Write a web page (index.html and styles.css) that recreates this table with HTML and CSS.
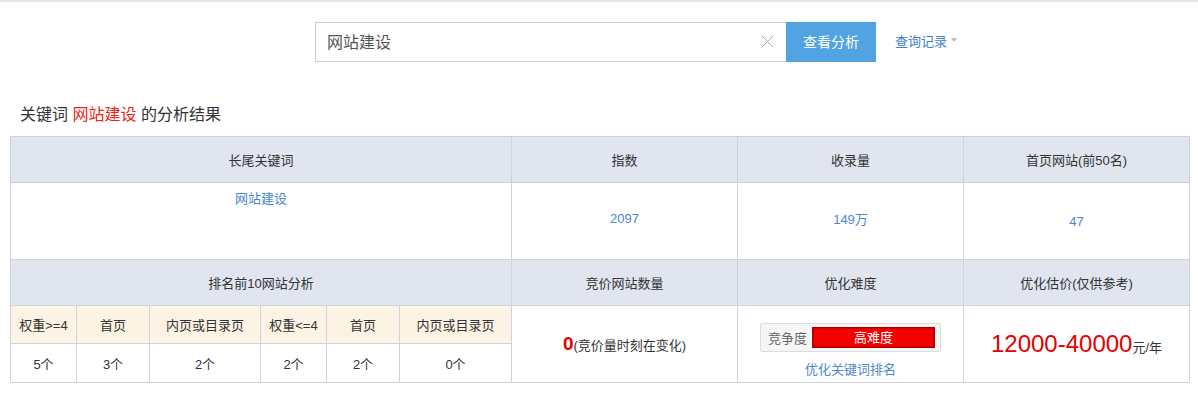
FILE: index.html
```html
<!DOCTYPE html>
<html lang="zh-CN">
<head>
<meta charset="utf-8">
<title>关键词分析</title>
<link rel="stylesheet" href="styles.css">
</head>
<body>
<div class="topbar"></div>
<div class="search">
  <div class="search-box">
    <span class="search-text">网站建设</span>
    <svg class="clear" width="13" height="13" viewBox="0 0 13 13"><path d="M0.5 0.5L12.5 12.5M12.5 0.5L0.5 12.5" stroke="#a9a9a9" stroke-width="1" fill="none"/></svg>
  </div>
  <div class="search-btn">查看分析</div>
  <div class="history">查询记录<span class="caret"></span></div>
</div>
<h2 class="title">关键词 <span class="kw">网站建设</span> 的分析结果</h2>
<table class="result">
  <colgroup>
    <col class="c1"><col class="c2"><col class="c3"><col class="c4"><col class="c5"><col class="c6">
    <col class="cw"><col class="cw"><col class="cw">
  </colgroup>
  <tr class="head">
    <th colspan="6">长尾关键词</th>
    <th>指数</th>
    <th>收录量</th>
    <th>首页网站(前50名)</th>
  </tr>
  <tr class="data">
    <td colspan="6" class="top"><a class="link">网站建设</a></td>
    <td><a class="link">2097</a></td>
    <td><a class="link">149万</a></td>
    <td><a class="link num47">47</a></td>
  </tr>
  <tr class="head">
    <th colspan="6">排名前10网站分析</th>
    <th>竞价网站数量</th>
    <th>优化难度</th>
    <th>优化估价(仅供参考)</th>
  </tr>
  <tr class="sub">
    <td class="subhead">权重&gt;=4</td>
    <td class="subhead">首页</td>
    <td class="subhead">内页或目录页</td>
    <td class="subhead">权重&lt;=4</td>
    <td class="subhead">首页</td>
    <td class="subhead">内页或目录页</td>
    <td rowspan="2"><span class="zero">0</span>(竞价量时刻在变化)</td>
    <td rowspan="2" class="diff-cell">
      <div class="diff">
        <span class="diff-label">竞争度</span>
        <span class="diff-bar">高难度</span>
      </div>
      <a class="link diff-link">优化关键词排名</a>
    </td>
    <td rowspan="2"><span class="price">12000-40000</span><span class="unit">元/年</span></td>
  </tr>
  <tr class="sub2">
    <td>5个</td>
    <td>3个</td>
    <td>2个</td>
    <td>2个</td>
    <td>2个</td>
    <td>0个</td>
  </tr>
</table>
</body>
</html>
```
FILE: styles.css
```css
* { box-sizing: border-box; }
html, body {
  margin: 0;
  padding: 0;
  background: #fff;
  font-family: "Liberation Sans", "Noto Sans CJK SC", sans-serif;
  color: #333;
  font-size: 13px;
}
.topbar {
  height: 2px;
  background: #e6e6e6;
}
.search {
  display: flex;
  align-items: center;
  margin: 20px 0 0 315px;
  height: 40px;
}
.search-box {
  width: 471px;
  height: 40px;
  border: 1px solid #cccccc;
  border-right: none;
  display: flex;
  align-items: center;
  justify-content: space-between;
  padding: 0 12px 2px 11px;
}
.search-text {
  font-size: 16px;
  color: #555;
}
.clear { display: block; margin-top: 0; }
.search-btn {
  width: 90px;
  height: 40px;
  background: #52a3e2;
  color: #fff;
  font-size: 14px;
  display: flex;
  align-items: center;
  justify-content: center;
  padding-bottom: 2px;
}
.history {
  margin-left: 19px;
  color: #3b7fd2;
  font-size: 13px;
  display: flex;
  align-items: center;
  padding-bottom: 4px;
}
.caret {
  display: inline-block;
  margin-left: 4px;
  width: 0;
  height: 0;
  border-left: 3px solid transparent;
  border-right: 3px solid transparent;
  border-top: 4px solid #bbbbbb;
}
.title {
  margin: 42px 0 10px 20px;
  font-size: 16px;
  font-weight: normal;
  line-height: 22px;
  color: #333;
}
.kw { color: #e8231c; }
.result {
  margin-left: 10px;
  width: 1180px;
  border-collapse: collapse;
  table-layout: fixed;
}
.c1 { width: 66px; }
.c2 { width: 73px; }
.c3 { width: 111px; }
.c4 { width: 66px; }
.c5 { width: 73px; }
.c6 { width: 112px; }
.cw { width: 226px; }
.result th, .result td {
  border: 1px solid #cdd2dd;
  padding: 0;
  text-align: center;
  vertical-align: middle;
  font-weight: normal;
  font-size: 13px;
  color: #333;
}
.head { height: 46px; }
.head th { background: #e0e5ef; }
.data { height: 77px; }
.data td { padding-bottom: 5px; }
.result td.top { vertical-align: top; padding-top: 5px; padding-bottom: 0; }
.link { color: #4a86cf; text-decoration: none; }
.num47 { position: relative; top: 3px; }
.sub { height: 38px; }
.sub2 { height: 39px; }
.result td.subhead { background: #fcf3e5; }
.zero {
  color: #e60000;
  font-weight: bold;
  font-size: 19px;
}
.result td.diff-cell { vertical-align: top; padding-top: 17px; }
.diff {
  width: 181px;
  height: 29px;
  margin: 0 auto;
  border: 1px solid #dcdcdc;
  border-radius: 2px;
  background: #f6f6f6;
  display: flex;
  align-items: center;
  justify-content: space-between;
  padding: 0 5px 0 7px;
}
.diff-label { color: #666; font-size: 13px; }
.diff-bar {
  width: 123px;
  height: 21px;
  background: #f40000;
  border: 1px solid #a80000;
  box-shadow: inset 0 0 2px #7a0000;
  color: #fff;
  font-size: 13px;
  line-height: 19px;
  text-align: center;
}
.diff-link {
  display: block;
  margin-top: 10px;
  font-size: 13px;
  line-height: 16px;
}
.price {
  color: #e60000;
  font-size: 24px;
}
.unit { font-size: 13px; color: #333; }
```
